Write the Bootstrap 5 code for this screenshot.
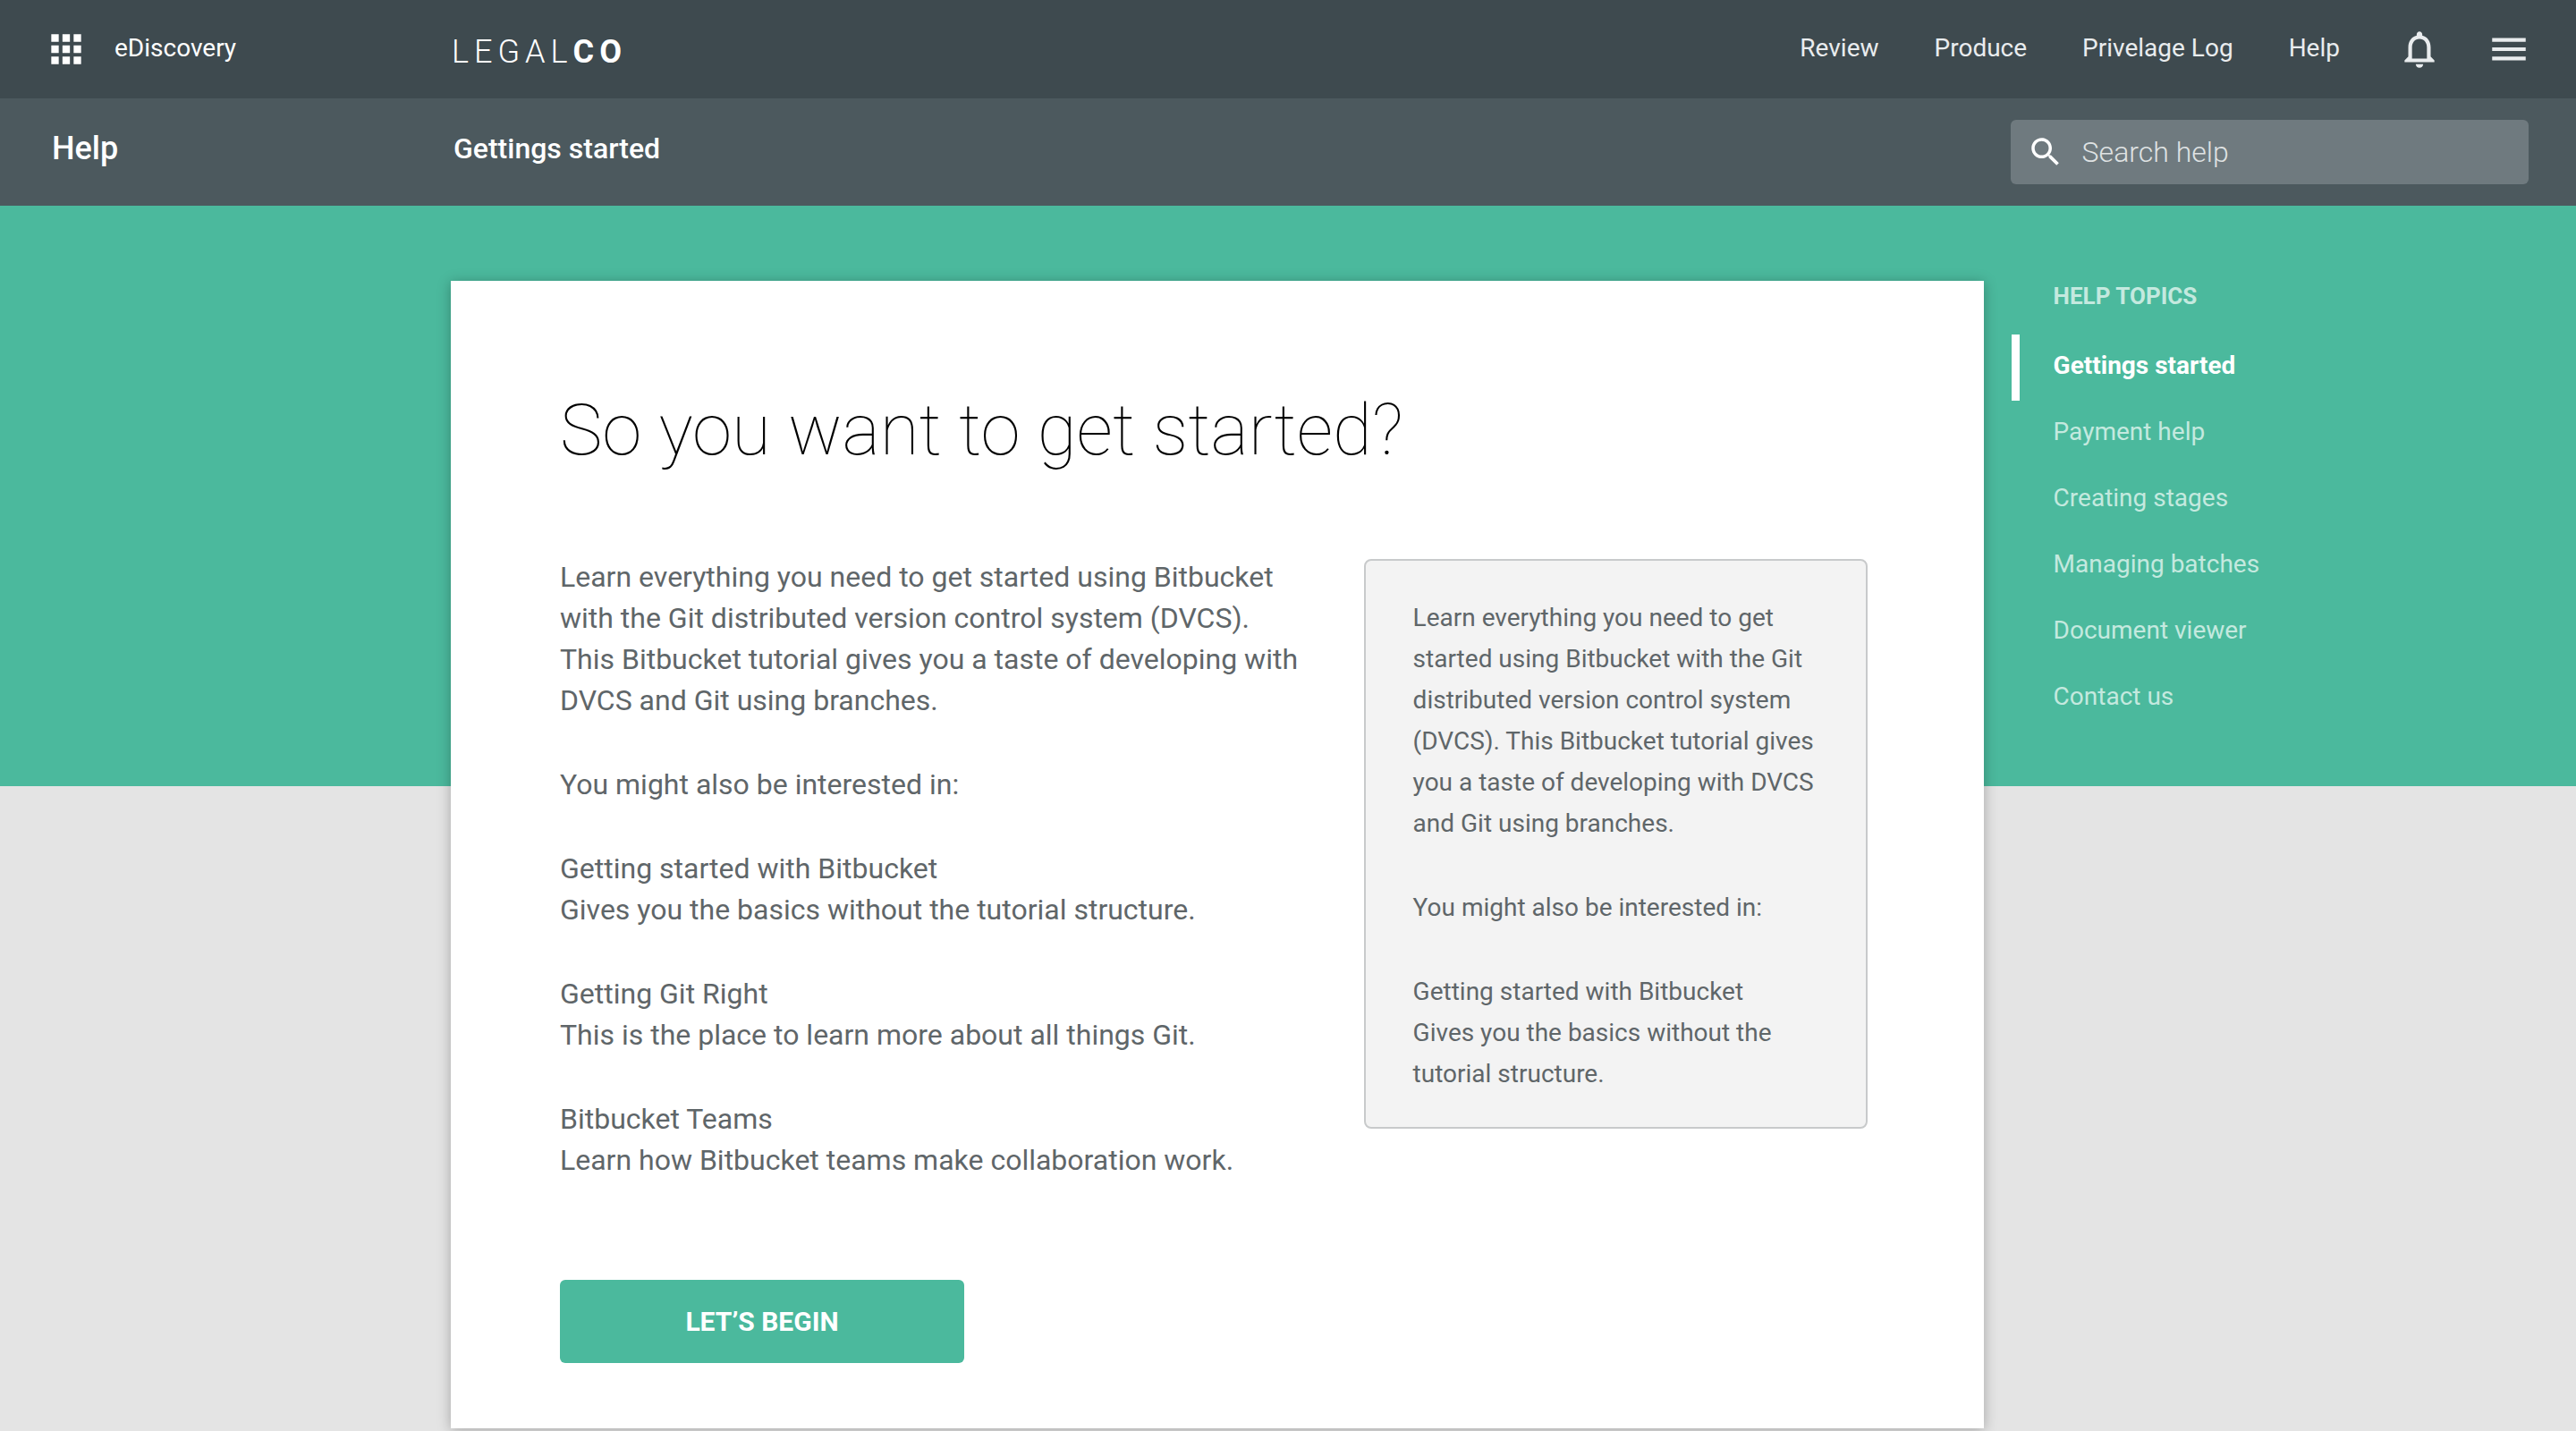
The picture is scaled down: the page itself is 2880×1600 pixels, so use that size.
<!DOCTYPE html>
<html lang="en">
<head>
<meta charset="utf-8">
<meta name="viewport" content="width=device-width, initial-scale=1">
<title>LegalCo – Help</title>
<link href="https://cdn.jsdelivr.net/npm/bootstrap@5.3.0/dist/css/bootstrap.min.css" rel="stylesheet">
<style>
:root{--green:#4bb99d;--edge:58px;--gutter:17.5%;--aside:23%}
body{font-family:Roboto,"Open Sans",sans-serif;background:#e4e4e4;color:#5f6669;font-size:28px}
a{text-decoration:none}
.topbar{height:110px;background:#3e4a4f;color:#fff}
.subbar{height:120px;background:#4c595e;color:#fff}
.lead-cell{width:var(--gutter);padding-left:var(--edge);flex:none}
.brand-name{font-size:36px;line-height:44px;font-weight:300;letter-spacing:6px;color:#fff;padding:5px 0 0 1px}
.brand-name b{font-weight:700}
.icon-button{border:0;background:none;padding:0;color:inherit;line-height:0}
.icon-button svg{width:50px;height:50px;fill:currentColor}
.app-launch{margin-left:-9px;gap:29px}
.app-launch span,.menu-links{padding-bottom:2px}
.menu-links{gap:62px;padding-right:64px}
.menu-links a{color:#e9ecee;font-size:28px;line-height:36px}
.menu-tools{gap:50px;padding-right:50px;color:#e9ecee}
.section-name,.page-name{line-height:44px;font-weight:500;padding-bottom:8px}
.section-name{font-size:36px}
.page-name{font-size:32px;padding-left:3px}
.search-cell{width:var(--aside);padding:0 53px 0 30px;flex:none}
.search-box{height:72px;border-radius:6px;background:#6f7a7f;padding-left:18px;gap:20px}
.search-box svg{width:42px;height:42px;fill:#fff;flex:none}
.search-box input{background:none;border:0;outline:0;color:#fff;font-size:32px;line-height:40px;font-weight:300;padding:0;min-width:0}
.search-box input::placeholder{color:#dfe2e3;opacity:1}
main{background:linear-gradient(var(--green) 649px,#e4e4e4 0);padding:84px 0 3px var(--gutter);min-height:calc(100vh - 230px)}
.sheet{background:#fff;box-shadow:0 2px 14px rgba(0,0,0,.28);padding:117px 130px 73px 122px}
.sheet h1{font-size:80px;line-height:100px;font-weight:100;color:#000;margin:0 0 91px}
.copy{font-size:32px;line-height:46px}
.copy p,.note p{margin:0 0 48px}
.copy-column{width:832px}
.note{width:563px;font-size:28px;line-height:46px;background:#f3f3f3;border:2px solid #c8cacb;border-radius:8px;padding:41px 46px 36px 53px;margin-top:3px}
.note p:last-child,.copy p:last-child{margin-bottom:0}
.begin{width:452px;height:93px;background:var(--green);border:0;border-radius:6px;color:#fff;font-size:30px;font-weight:700;margin-top:111px}
.topics{width:calc(var(--aside) / .825);flex:none;padding-left:31px}
.topics h2{font-size:26px;line-height:34px;font-weight:700;color:#c4e9df;margin:0;padding:0 0 26px 47px}
.topics a{display:block;height:74px;line-height:70px;font-size:28px;color:#c4e9df;padding-left:38px;border-left:9px solid transparent}
.topics a.active{color:#fff;font-weight:700;border-left-color:#fff}
</style>
<script src="https://cdn.jsdelivr.net/npm/bootstrap@5.3.0/dist/js/bootstrap.bundle.min.js"></script>
</head>
<body>
<header>
  <nav class="topbar d-flex align-items-center" aria-label="Main">
    <div class="lead-cell d-flex align-items-center">
      <div class="app-launch d-flex align-items-center">
        <button class="icon-button" type="button" aria-label="Apps"><svg viewBox="0 0 24 24"><path d="M4 8h4V4H4zm6 12h4v-4h-4zm-6 0h4v-4H4zm0-6h4v-4H4zm6 0h4v-4h-4zm6-10v4h4V4zm-6 4h4V4h-4zm6 6h4v-4h-4zm0 6h4v-4h-4z"/></svg></button>
        <span>eDiscovery</span>
      </div>
    </div>
    <a class="brand-name" href="#">LEGAL<b>CO</b></a>
    <div class="menu-links d-flex ms-auto">
      <a href="#">Review</a><a href="#">Produce</a><a href="#">Privelage Log</a><a href="#">Help</a>
    </div>
    <div class="menu-tools d-flex">
      <button class="icon-button" type="button" aria-label="Notifications"><svg viewBox="0 0 24 24"><path d="M12 22c1.1 0 2-.9 2-2h-4c0 1.1.9 2 2 2zm6-6v-5c0-3.07-1.63-5.64-4.5-6.32V4c0-.83-.67-1.5-1.5-1.5s-1.5.67-1.5 1.5v.68C7.64 5.36 6 7.92 6 11v5l-2 2v1h16v-1l-2-2zm-2 1H8v-6c0-2.48 1.51-4.5 4-4.5s4 2.02 4 4.5v6z"/></svg></button>
      <button class="icon-button" type="button" aria-label="Menu"><svg viewBox="0 0 24 24"><path d="M3 18h18v-2H3v2zm0-5h18v-2H3v2zm0-7v2h18V6H3z"/></svg></button>
    </div>
  </nav>
  <div class="subbar d-flex align-items-center">
    <div class="lead-cell section-name">Help</div>
    <div class="page-name">Gettings started</div>
    <form class="search-cell ms-auto" role="search">
      <label class="search-box d-flex align-items-center">
        <svg viewBox="0 0 24 24" aria-hidden="true"><path d="M15.5 14h-.79l-.28-.27C15.41 12.59 16 11.11 16 9.5 16 5.91 13.09 3 9.5 3S3 5.91 3 9.5 5.91 16 9.5 16c1.61 0 3.09-.59 4.23-1.57l.27.28v.79l5 4.99L20.49 19l-4.99-5zm-6 0C7.01 14 5 11.99 5 9.5S7.01 5 9.5 5 14 7.01 14 9.5 11.99 14 9.5 14z"/></svg>
        <input class="flex-grow-1" type="search" placeholder="Search help" aria-label="Search help">
      </label>
    </form>
  </div>
</header>
<main class="d-flex align-items-start">
  <article class="sheet flex-grow-1">
    <h1>So you want to get started?</h1>
    <div class="d-flex justify-content-between align-items-start">
      <div class="copy-column">
        <div class="copy">
          <p>Learn everything you need to get started using Bitbucket with the Git distributed version control system (DVCS). This Bitbucket tutorial gives you a taste of developing with DVCS and Git using branches.</p>
          <p>You might also be interested in:</p>
          <p>Getting started with Bitbucket<br>Gives you the basics without the tutorial structure.</p>
          <p>Getting Git Right<br>This is the place to learn more about all things Git.</p>
          <p>Bitbucket Teams<br>Learn how Bitbucket teams make collaboration work.</p>
        </div>
        <button class="begin btn d-block" type="button">LET’S BEGIN</button>
      </div>
      <aside class="note">
        <p>Learn everything you need to get started using Bitbucket with the Git distributed version control system (DVCS). This Bitbucket tutorial gives you a taste of developing with DVCS and Git using branches.</p>
        <p>You might also be interested in:</p>
        <p>Getting started with Bitbucket<br>Gives you the basics without the tutorial structure.</p>
      </aside>
    </div>
  </article>
  <nav class="topics" aria-label="Help topics">
    <h2>HELP TOPICS</h2>
    <a class="active" href="#" aria-current="page">Gettings started</a>
    <a href="#">Payment help</a>
    <a href="#">Creating stages</a>
    <a href="#">Managing batches</a>
    <a href="#">Document viewer</a>
    <a href="#">Contact us</a>
  </nav>
</main>
</body>
</html>
